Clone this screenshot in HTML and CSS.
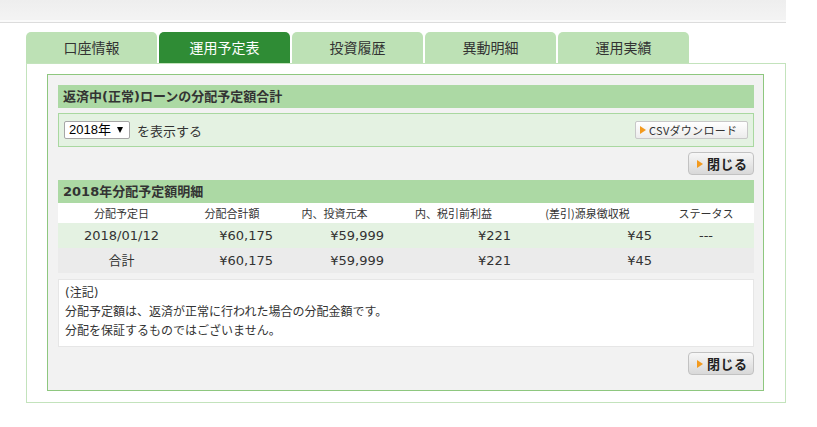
FILE: index.html
```html
<!DOCTYPE html>
<html lang="ja">
<head>
<meta charset="utf-8">
<title>運用予定表</title>
<link rel="stylesheet" href="styles.css">
</head>
<body>
<div class="page">
  <div class="topbar"></div>
  <div class="main">
    <nav class="tabs">
      <a class="tab">口座情報</a>
      <a class="tab active">運用予定表</a>
      <a class="tab">投資履歴</a>
      <a class="tab">異動明細</a>
      <a class="tab">運用実績</a>
    </nav>
    <div class="panel">
      <div class="inner">
        <h2 class="bar">返済中(正常)ローンの分配予定額合計</h2>
        <div class="filter">
          <div class="filter-left">
            <span class="year-select"><span class="year-text">2018年</span><span class="arrow"></span></span>
            <span class="filter-label">を表示する</span>
          </div>
          <a class="csv-btn"><span class="tri"></span>CSVダウンロード</a>
        </div>
        <div class="btn-row">
          <a class="close-btn"><span class="tri"></span>閉じる</a>
        </div>
        <h2 class="bar bar2">2018年分配予定額明細</h2>
        <table class="detail">
          <colgroup>
            <col class="c1"><col class="c2"><col class="c3"><col class="c4"><col class="c5"><col class="c6">
          </colgroup>
          <thead>
            <tr>
              <th>分配予定日</th>
              <th>分配合計額</th>
              <th>内、投資元本</th>
              <th>内、税引前利益</th>
              <th>(差引)源泉徴収税</th>
              <th>ステータス</th>
            </tr>
          </thead>
          <tbody>
            <tr class="row-data">
              <td class="center">2018/01/12</td>
              <td class="num">¥60,175</td>
              <td class="num">¥59,999</td>
              <td class="num">¥221</td>
              <td class="num">¥45</td>
              <td class="center">---</td>
            </tr>
            <tr class="row-total">
              <td class="center">合計</td>
              <td class="num">¥60,175</td>
              <td class="num">¥59,999</td>
              <td class="num">¥221</td>
              <td class="num">¥45</td>
              <td class="center"></td>
            </tr>
          </tbody>
        </table>
        <div class="notes">
          <p>(注記)</p>
          <p>分配予定額は、返済が正常に行われた場合の分配金額です。</p>
          <p>分配を保証するものではございません。</p>
        </div>
        <div class="btn-row">
          <a class="close-btn"><span class="tri"></span>閉じる</a>
        </div>
      </div>
    </div>
  </div>
</div>
</body>
</html>
```
FILE: styles.css
```css
* { box-sizing: border-box; }

body {
  margin: 0;
  background: #fff;
  font-family: "DejaVu Sans", "Noto Sans CJK JP", sans-serif;
  color: #333;
}

.page {
  width: 786px;
}

.topbar {
  height: 23px;
  background: linear-gradient(#eeeeee, #f4f4f4);
  border-bottom: 1px solid #dcdcdc;
  box-shadow: inset 0 -2px 0 #fafafa;
}

.main {
  padding: 9px 0 0 26px;
}

.tabs {
  display: flex;
  gap: 2px;
}

.tab {
  display: block;
  width: 131px;
  height: 31px;
  line-height: 31px;
  text-align: center;
  font-family: "Noto Sans CJK JP", sans-serif;
  font-size: 14px;
  color: #333;
  background: #bde1b5;
  border-radius: 5px 5px 0 0;
}

.tab.active {
  background: #2f8c35;
  color: #fff;
}

.panel {
  border: 1px solid #c3e3bc;
  padding: 10px 21px 11px 20px;
  background: #fff;
}

.inner {
  border: 1px solid #8ec77f;
  background: #f2f2f2;
  padding: 10px 9px 15px 10px;
}

.bar {
  margin: 0;
  height: 23px;
  line-height: 23px;
  padding-left: 5px;
  background: #acd9a4;
  font-size: 13px;
  font-weight: bold;
  color: #333;
}

.filter {
  margin-top: 5px;
  height: 34px;
  border: 1px solid #a9d8a0;
  background: #e4f2e2;
  display: flex;
  align-items: center;
  justify-content: space-between;
  padding: 0 5px 0 5px;
}

.filter-left {
  display: flex;
  align-items: center;
  gap: 7px;
}

.year-select {
  display: flex;
  align-items: center;
  width: 66px;
  height: 18px;
  border: 1px solid #a6a6a6;
  border-radius: 2px;
  background: #fff;
  padding-left: 4px;
  padding-right: 6px;
  font-family: "Liberation Sans", "Noto Sans CJK JP", sans-serif;
  font-size: 13px;
  color: #000;
  line-height: 16px;
  white-space: nowrap;
}

.arrow {
  display: block;
  flex: none;
  margin-left: auto;
  width: 0;
  height: 0;
  border-left: 3px solid transparent;
  border-right: 3px solid transparent;
  border-top: 6px solid #000;
}

.filter-label {
  font-family: "Noto Sans CJK JP", sans-serif;
  font-size: 13px;
  color: #333;
}

.csv-btn {
  display: flex;
  align-items: center;
  width: 113px;
  height: 18px;
  border: 1px solid #c8c8c8;
  border-radius: 2px;
  background: linear-gradient(#ffffff, #ececec);
  padding-left: 4px;
  font-family: "Noto Sans CJK JP", sans-serif;
  font-size: 11px;
  letter-spacing: 0.3px;
  color: #333;
  line-height: 16px;
}

.tri {
  display: inline-block;
  width: 0;
  height: 0;
  border-top: 4px solid transparent;
  border-bottom: 4px solid transparent;
  border-left: 6px solid #f39a1e;
  margin-right: 3px;
}

.btn-row {
  display: flex;
  justify-content: flex-end;
  margin-top: 5px;
}

.close-btn {
  display: flex;
  align-items: center;
  width: 66px;
  height: 23px;
  border: 1px solid #c2c2c2;
  border-radius: 4px;
  background: linear-gradient(#f7f7f7, #d8d8d8);
  padding-left: 8px;
  font-family: "Noto Sans CJK JP", sans-serif;
  font-size: 13px;
  font-weight: bold;
  color: #222;
  letter-spacing: 0.5px;
}

.close-btn .tri {
  margin-right: 4px;
}

.bar2 {
  margin-top: 5px;
}

.detail {
  width: 100%;
  border-collapse: collapse;
  table-layout: fixed;
}

.c1 { width: 127px; }
.c2 { width: 94px; }
.c3 { width: 111px; }
.c4 { width: 127px; }
.c5 { width: 141px; }
.c6 { width: 96px; }

.detail th {
  height: 20px;
  padding: 0;
  background: #fff;
  font-family: "Noto Sans CJK JP", sans-serif;
  font-size: 11px;
  font-weight: normal;
  text-align: center;
  color: #333;
  line-height: 20px;
}

.detail td {
  height: 25px;
  padding: 0;
  font-size: 13px;
  line-height: 25px;
  color: #333;
}

.detail td.num {
  text-align: right;
  padding-right: 6px;
}

.detail td.center {
  text-align: center;
}

.row-data td {
  background: #e4f2e2;
}

.row-total td {
  background: #ebebeb;
}

.notes {
  margin-top: 6px;
  border: 1px solid #e6e6e6;
  background: #fff;
  padding: 4px 6px 5px 6px;
  font-size: 12px;
  line-height: 19px;
  color: #333;
}

.notes p {
  margin: 0;
}
```
